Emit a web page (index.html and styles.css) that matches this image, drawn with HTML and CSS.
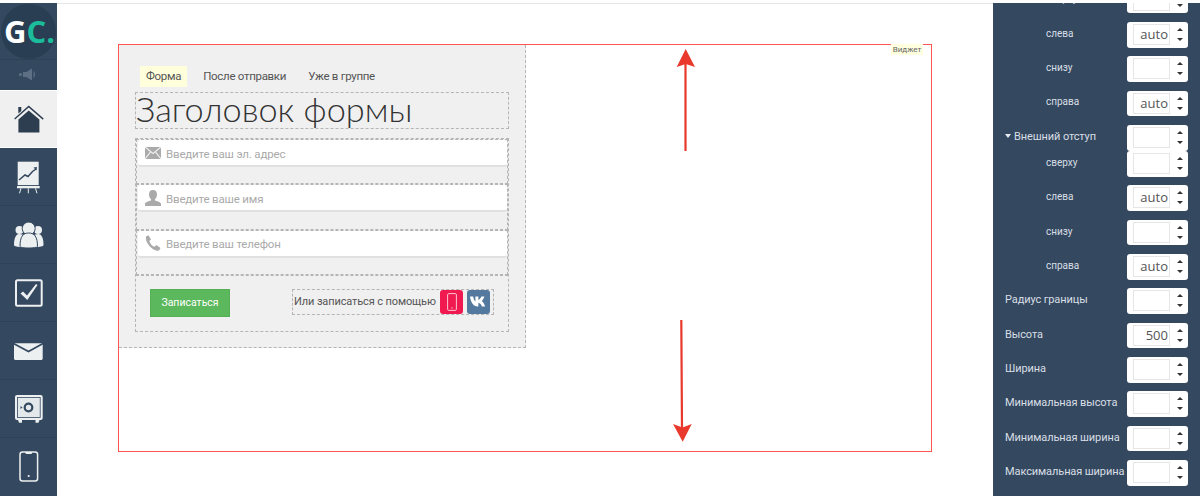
FILE: index.html
```html
<!DOCTYPE html>
<html lang="ru">
<head>
<meta charset="utf-8">
<title>Виджет</title>
<link rel="stylesheet" href="styles.css">
</head>
<body>
<nav class="sidebar">
  <div class="logo"><div class="logo-circle"><span class="logo-g">G</span><span class="logo-c">C.</span></div></div>
  <div class="sound">
    <svg class="nav-svg" viewBox="0 61 57 30" width="57" height="30"><g fill="#5d6f83"><circle cx="20.5" cy="75.5" r="1.6"/><path d="M23 73h3.5l5.5-3.500v12l-5.500-3.500H23z"/><path d="M33.500 71.500c2 2 2 6 0 8z"/></g></svg>
  </div>
  <a class="nav-item nav-active">
    <svg class="nav-svg" viewBox="0 92 57 56" width="57" height="56"><g fill="#2c3e50"><path d="M18.300 108h3v4l-3 2.400z"/><path d="M14.200 119.400 28.700 106.400 43.700 119.600 42.800 120.800 28.700 108.400 15.100 120.600z"/><path d="M28.700 111.400 39.400 120.600V133.400H18.400V120.600z"/></g></svg>
  </a>
  <a class="nav-item">
    <svg class="nav-svg" viewBox="0 148 57 58" width="57" height="58"><path fill="#ecf0f1" d="M17.700 161.700h21v23.400h-21z"/><path fill="none" stroke="#34485f" stroke-width="1.500" d="M19 180l6-5 3 1.500 4.500-5 3.500-2.500"/><path fill="#34485f" d="M33.500 167.500l3.500-.5-.5 3.500z"/><path fill="#ecf0f1" d="M17 186h22.700v2.300H17z"/><path fill="none" stroke="#ecf0f1" stroke-width="1" d="M21 188.300l-1.500 5M28.300 188.300v5M35.500 188.300l1.500 5"/></svg>
  </a>
  <a class="nav-item">
    <svg class="nav-svg" viewBox="0 206 57 58" width="57" height="58"><g fill="#ecf0f1"><circle cx="19.500" cy="230" r="4"/><circle cx="38" cy="230" r="4"/><path d="M14 245c0-7 2-11 5-11s4 1 4 1l-1 12c-4 0-8-.6-8-2z"/><path d="M43.500 245c0-7-2-11-5-11s-4 1-4 1l1 12c4 0 8-.6 8-2z"/><circle cx="28.700" cy="228.500" r="6.500" stroke="#34485f" stroke-width="1"/><path d="M20 246.500c0-10 3-13.500 8.700-13.500s8.800 3.500 8.800 13.500c0 2-17.500 2-17.500 0z" stroke="#34485f" stroke-width="1"/></g></svg>
  </a>
  <a class="nav-item">
    <svg class="nav-svg" viewBox="0 264 57 58" width="57" height="58"><rect x="16" y="280.300" width="25.700" height="25.500" rx="1.500" fill="none" stroke="#ecf0f1" stroke-width="2"/><path fill="#ecf0f1" d="M20.500 293.500l2.500-2 4 4 9-11.500 1.500 1-10.200 15z"/></svg>
  </a>
  <a class="nav-item">
    <svg class="nav-svg" viewBox="0 322 57 58" width="57" height="58"><path fill="#ecf0f1" d="M15 343.300h27l.7.700v15l-1 1H15l-1-1v-15z"/><path fill="none" stroke="#34485f" stroke-width="1.600" d="M13.500 343.500l15 8 14.500-8"/></svg>
  </a>
  <a class="nav-item">
    <svg class="nav-svg" viewBox="0 380 57 58" width="57" height="58"><rect x="15" y="395" width="27.700" height="25" rx="2" fill="#ecf0f1"/><path fill="#ecf0f1" d="M18 420h4v2.700h-3zM35.500 420h4l-1 2.700h-3z"/><rect x="17.500" y="397.500" width="22.700" height="20" fill="#e3e8eb" stroke="#34485f" stroke-width=".8"/><circle cx="28.500" cy="407.500" r="3.800" fill="none" stroke="#34485f" stroke-width="2.200"/><path fill="#34485f" d="M20.500 406l2 1.500-2 1.500z"/></svg>
  </a>
  <a class="nav-item nav-last">
    <svg class="nav-svg" viewBox="0 438 57 58" width="57" height="58"><rect x="20" y="452" width="17.600" height="29" rx="2.500" fill="none" stroke="#ecf0f1" stroke-width="1.500"/><path fill="#ecf0f1" d="M25 452h7.500l-1 2h-5.500z"/><circle cx="28.700" cy="476" r="1.100" fill="#ecf0f1"/></svg>
  </a>
</nav>

<main class="main">
  <section class="widget">
    <div class="form">
      <div class="tabs">
        <span class="tab tab-active">Форма</span>
        <span class="tab">После отправки</span>
        <span class="tab">Уже в группе</span>
      </div>
      <h1 class="form-title">Заголовок формы</h1>
      <div class="fields">
        <div class="field">
          <div class="input">
            <svg class="input-icon" viewBox="0 0 16 14" width="16" height="14"><path fill="#aaa" d="M0 1h16v12H0z"/><path fill="none" stroke="#efefef" stroke-width="1.100" d="M0 1l8 6.500L16 1M0 13l5.800-7.300M16 13l-5.800-7.300"/></svg>
            <span class="placeholder">Введите ваш эл. адрес</span>
          </div>
        </div>
        <div class="field">
          <div class="input">
            <svg class="input-icon" viewBox="0 0 16 16" width="16" height="16"><path fill="#aaa" d="M8 0c2.800 0 4 2 4 4.500 0 2-.8 3.700-2 4.800v1.200c2 .8 6 1.500 6 3.500v2H0v-2c0-2 4-2.700 6-3.500V9.300C4.800 8.200 4 6.500 4 4.500 4 2 5.200 0 8 0z"/></svg>
            <span class="placeholder">Введите ваше имя</span>
          </div>
        </div>
        <div class="field">
          <div class="input">
            <svg class="input-icon" viewBox="0 0 16 16" width="16" height="16"><path fill="#aaa" d="M1 1.500 3.500.2 6 4.500 4.300 6c.5 2.500 2.800 5 5.200 5.800L11.300 10l4.200 3-1.500 2.500c-1.800.8-4.500 0-7.500-2.500C2.500 9.500.2 5 1 1.500z"/></svg>
            <span class="placeholder">Введите ваш телефон</span>
          </div>
        </div>
        <div class="actions">
          <button class="submit" type="button">Записаться</button>
          <div class="social">
            <span class="social-text">Или записаться с помощью</span>
            <span class="social-btn social-phone">
              <svg viewBox="0 0 10 18" width="10" height="18"><rect x=".6" y=".6" width="8.800" height="16.800" rx="1.200" fill="none" stroke="#fbc6d4" stroke-width="1"/><circle cx="5" cy="15" r=".7" fill="#fbc6d4"/></svg>
            </span>
            <span class="social-btn social-vk">
              <svg viewBox="0 0 20 12" width="18" height="11"><path fill="#fff" d="M0 .5h3.500c.5 3 1.500 5 2.500 5.500V.5h3.300v3.800C10.500 4 11.800 2.500 12.700.5H16c-.5 2-2 4-3 5 1.300 1 3 3 3.800 6h-3.600c-.7-2-2-3.500-3.900-4v4h-1C4 11.500 1 7.500 0 .5z"/></svg>
            </span>
          </div>
        </div>
      </div>
    </div>
    <span class="widget-tag">Виджет</span>
    <svg class="arrows" viewBox="118 44 815 408" width="815" height="408">
      <path fill="none" stroke="#e8392c" stroke-width="2.200" d="M685.500 151V62M681.300 320l.7 108"/>
      <path fill="#e8392c" d="M685.700 49l9.300 18-9.300-3-9 3zM682.700 441.700 673 424l9.500 3.500 9.200-3.500z"/>
    </svg>
  </section>
</main>

<aside class="panel">
  <div class="prop-list">
    <div class="prop prop-sub"><span class="prop-label">сверху</span><div class="spin"><span class="spin-input"></span><span class="spin-arrows"><i class="up"></i><i class="down"></i></span></div></div>
    <div class="prop prop-sub"><span class="prop-label">слева</span><div class="spin"><span class="spin-input">auto</span><span class="spin-arrows"><i class="up"></i><i class="down"></i></span></div></div>
    <div class="prop prop-sub"><span class="prop-label">снизу</span><div class="spin"><span class="spin-input"></span><span class="spin-arrows"><i class="up"></i><i class="down"></i></span></div></div>
    <div class="prop prop-sub"><span class="prop-label">справа</span><div class="spin"><span class="spin-input">auto</span><span class="spin-arrows"><i class="up"></i><i class="down"></i></span></div></div>
    <div class="prop prop-group"><span class="prop-label"><i class="caret"></i>Внешний отступ</span><div class="spin"><span class="spin-input"></span><span class="spin-arrows"><i class="up"></i><i class="down"></i></span></div></div>
    <div class="prop prop-sub"><span class="prop-label">сверху</span><div class="spin"><span class="spin-input"></span><span class="spin-arrows"><i class="up"></i><i class="down"></i></span></div></div>
    <div class="prop prop-sub"><span class="prop-label">слева</span><div class="spin"><span class="spin-input">auto</span><span class="spin-arrows"><i class="up"></i><i class="down"></i></span></div></div>
    <div class="prop prop-sub"><span class="prop-label">снизу</span><div class="spin"><span class="spin-input"></span><span class="spin-arrows"><i class="up"></i><i class="down"></i></span></div></div>
    <div class="prop prop-sub"><span class="prop-label">справа</span><div class="spin"><span class="spin-input">auto</span><span class="spin-arrows"><i class="up"></i><i class="down"></i></span></div></div>
    <div class="prop"><span class="prop-label">Радиус границы</span><div class="spin"><span class="spin-input"></span><span class="spin-arrows"><i class="up"></i><i class="down"></i></span></div></div>
    <div class="prop"><span class="prop-label">Высота</span><div class="spin"><span class="spin-input">500</span><span class="spin-arrows"><i class="up"></i><i class="down"></i></span></div></div>
    <div class="prop"><span class="prop-label">Ширина</span><div class="spin"><span class="spin-input"></span><span class="spin-arrows"><i class="up"></i><i class="down"></i></span></div></div>
    <div class="prop"><span class="prop-label">Минимальная высота</span><div class="spin"><span class="spin-input"></span><span class="spin-arrows"><i class="up"></i><i class="down"></i></span></div></div>
    <div class="prop"><span class="prop-label">Минимальная ширина</span><div class="spin"><span class="spin-input"></span><span class="spin-arrows"><i class="up"></i><i class="down"></i></span></div></div>
    <div class="prop"><span class="prop-label">Максимальная ширина</span><div class="spin"><span class="spin-input"></span><span class="spin-arrows"><i class="up"></i><i class="down"></i></span></div></div>
  </div>
</aside>
</body>
</html>
```

FILE: styles.css
```css
* { box-sizing: border-box; }
html, body { margin: 0; height: 496px; overflow: hidden; background: #fff; }
body { display: flex; font-family: Roboto, "Liberation Sans", sans-serif; color: #555; }

/* left navigation */
.sidebar { flex: 0 0 57px; margin-top: 3px; height: 493px; background: #34485f; display: flex; flex-direction: column; }
.logo { height: 58px; display: flex; align-items: center; justify-content: center; border-bottom: 1px solid #2e4157; }
.logo-circle { width: 55px; height: 55px; padding-left: 2px; border-radius: 50%; background: #2a3e53; display: flex; align-items: center; justify-content: center; font: 700 31px/1 "Open Sans", sans-serif; }
.logo-g { color: #fff; }
.logo-c { color: #1abc9c; }
.sound { height: 31px; }
.nav-item { display: block; height: 58px; border-bottom: 1px solid #2e4157; }
.nav-svg { display: block; }
.nav-active { height: 56px; margin-bottom: 1px; background: #f0f0f0; border-bottom: 0; box-shadow: 0 -1px 0 #fff, 0 1px 0 #fff; }
.nav-last { border-bottom: 0; }

/* centre canvas */
.main { flex: 0 0 936px; height: 493px; margin-top: 3px; border-top: 1px solid #e6e6e6; padding: 40px 0 0 61px; }
.widget { position: relative; width: 814px; height: 408px; border: 1px solid #f55; }
.widget-tag { position: absolute; top: -1px; right: 8px; width: 32px; height: 11px; background: #ffffdf; font-size: 8px; line-height: 11px; text-align: center; color: #666; }
.arrows { position: absolute; left: -1px; top: -1px; pointer-events: none; }

.form { width: 407px; height: 303px; padding: 21px 0 0 16px; background: #f0f0f0; border-right: 1px dashed #b5b5b5; border-bottom: 1px dashed #b5b5b5; }
.tabs { display: flex; gap: 10px; margin-left: 5px; height: 21px; }
.tab { padding: 0 6px; font-size: 11.500px; letter-spacing: -.3px; line-height: 21px; color: #555; }
.tab-active { background: #ffffdc; }
.form-title { width: 374px; height: 37px; margin: 5px 0 9px; border: 1px dashed #b5b5b5; font-family: Lato, sans-serif; font-size: 34.300px; font-weight: 300; line-height: 31px; color: #333; white-space: nowrap; }

.fields { width: 374px; height: 194px; border: 1px dashed #b5b5b5; }
.field { height: 45.300px; border: 1px dashed #b5b5b5; }
.input { height: 27px; margin-left: 1px; display: flex; align-items: center; padding-left: 7px; background: #fff; border-bottom: 2px solid #e0e0e0; border-radius: 3px; }
.input-icon { flex: none; margin-right: 5px; }
.placeholder { padding-top: 2px; font-size: 11.500px; letter-spacing: -.17px; color: #aaa; }

.actions { display: flex; justify-content: space-between; align-items: flex-start; padding: 13px 14px 0; height: 56px; border-top: 1px dashed #b5b5b5; }
.submit { width: 80px; height: 28px; padding: 0; border: 1px solid #56ae56; background: #5cb85c; color: #fff; font: 10.500px Roboto, sans-serif; }
.social { display: flex; align-items: center; width: 202px; height: 26px; padding: 0 3px 0 1px; border: 1px dashed #b5b5b5; }
.social-text { flex: 1; font-size: 11px; letter-spacing: -.12px; color: #555; white-space: nowrap; }
.social-btn { flex: none; width: 23px; height: 24px; margin-left: 4px; border-radius: 3px; display: flex; align-items: center; justify-content: center; }
.social-phone { background: #f01a50; }
.social-vk { background: #53799f; }
.social-btn svg { display: block; }

/* right properties panel */
.panel { flex: 0 0 207px; height: 493px; margin-top: 3px; background: #34485f; overflow: hidden; }
.prop-list { margin-top: -15.300px; padding: 0 12px; }
.prop { display: flex; align-items: center; justify-content: space-between; height: 25.500px; margin-bottom: 8.850px; }
.prop-group { margin-bottom: .5px; }
.prop-label { padding-bottom: 3px; font-size: 11px; letter-spacing: -.1px; color: #d8dfe6; white-space: nowrap; }
.prop-sub .prop-label { margin-left: 41px; font-size: 10px; letter-spacing: 0; }
.caret { display: inline-block; width: 0; height: 0; margin-right: 3px; vertical-align: 2px; border-left: 3.500px solid transparent; border-right: 3.500px solid transparent; border-top: 4px solid #e8edf1; }
.spin { flex: none; position: relative; width: 61px; height: 25.500px; padding: 2px 18px 2px 6px; background: #fff; border-radius: 3px; }
.spin-input { display: block; height: 21px; padding-right: 1px; border: 1px solid #e6e6e6; font: 13px/19px "Open Sans", sans-serif; text-align: right; color: #555; }
.spin-arrows { position: absolute; top: 6px; right: 5px; display: flex; flex-direction: column; gap: 7px; }
.spin-arrows i { display: block; width: 0; height: 0; border-left: 3px solid transparent; border-right: 3px solid transparent; }
.spin-arrows .up { border-bottom: 3px solid #333; }
.spin-arrows .down { border-top: 3px solid #333; }
```
